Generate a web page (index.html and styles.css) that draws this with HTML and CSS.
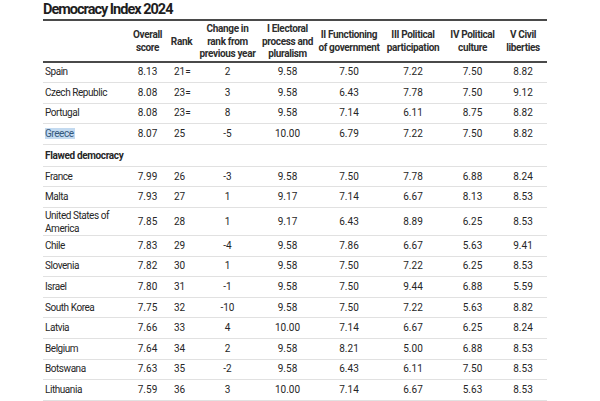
FILE: index.html
```html
<!DOCTYPE html>
<html lang="en">
<head>
<meta charset="utf-8">
<title>Democracy Index 2024</title>
<link rel="stylesheet" href="styles.css">
</head>
<body>
<div class="wrap">
  <h1 class="title">Democracy Index 2024</h1>
  <table class="di">
    <colgroup>
      <col class="c-country"><col class="c-score"><col class="c-rank"><col class="c-change">
      <col class="c-elec"><col class="c-func"><col class="c-part"><col class="c-cult"><col class="c-civ">
    </colgroup>
    <thead>
      <tr>
        <th class="th-country"></th>
        <th>Overall<br>score</th>
        <th>Rank</th>
        <th>Change in<br>rank from<br>previous year</th>
        <th>I Electoral<br>process and<br>pluralism</th>
        <th>II Functioning<br>of government</th>
        <th>III Political<br>participation</th>
        <th>IV Political<br>culture</th>
        <th>V Civil<br>liberties</th>
      </tr>
    </thead>
    <tbody>
      <tr><td class="country">Spain</td><td>8.13</td><td class="rank">21=</td><td>2</td><td>9.58</td><td>7.50</td><td>7.22</td><td>7.50</td><td>8.82</td></tr>
      <tr><td class="country">Czech Republic</td><td>8.08</td><td class="rank">23=</td><td>3</td><td>9.58</td><td>6.43</td><td>7.78</td><td>7.50</td><td>9.12</td></tr>
      <tr><td class="country">Portugal</td><td>8.08</td><td class="rank">23=</td><td>8</td><td>9.58</td><td>7.14</td><td>6.11</td><td>8.75</td><td>8.82</td></tr>
      <tr><td class="country"><span class="hl">Greece</span></td><td>8.07</td><td class="rank">25</td><td>-5</td><td>10.00</td><td>6.79</td><td>7.22</td><td>7.50</td><td>8.82</td></tr>
      <tr class="section"><td class="country" colspan="9">Flawed democracy</td></tr>
      <tr><td class="country">France</td><td>7.99</td><td class="rank">26</td><td>-3</td><td>9.58</td><td>7.50</td><td>7.78</td><td>6.88</td><td>8.24</td></tr>
      <tr><td class="country">Malta</td><td>7.93</td><td class="rank">27</td><td>1</td><td>9.17</td><td>7.14</td><td>6.67</td><td>8.13</td><td>8.53</td></tr>
      <tr class="tall"><td class="country">United States of<br>America</td><td>7.85</td><td class="rank">28</td><td>1</td><td>9.17</td><td>6.43</td><td>8.89</td><td>6.25</td><td>8.53</td></tr>
      <tr><td class="country">Chile</td><td>7.83</td><td class="rank">29</td><td>-4</td><td>9.58</td><td>7.86</td><td>6.67</td><td>5.63</td><td>9.41</td></tr>
      <tr><td class="country">Slovenia</td><td>7.82</td><td class="rank">30</td><td>1</td><td>9.58</td><td>7.50</td><td>7.22</td><td>6.25</td><td>8.53</td></tr>
      <tr><td class="country">Israel</td><td>7.80</td><td class="rank">31</td><td>-1</td><td>9.58</td><td>7.50</td><td>9.44</td><td>6.88</td><td>5.59</td></tr>
      <tr><td class="country">South Korea</td><td>7.75</td><td class="rank">32</td><td>-10</td><td>9.58</td><td>7.50</td><td>7.22</td><td>5.63</td><td>8.82</td></tr>
      <tr><td class="country">Latvia</td><td>7.66</td><td class="rank">33</td><td>4</td><td>10.00</td><td>7.14</td><td>6.67</td><td>6.25</td><td>8.24</td></tr>
      <tr><td class="country">Belgium</td><td>7.64</td><td class="rank">34</td><td>2</td><td>9.58</td><td>8.21</td><td>5.00</td><td>6.88</td><td>8.53</td></tr>
      <tr><td class="country">Botswana</td><td>7.63</td><td class="rank">35</td><td>-2</td><td>9.58</td><td>6.43</td><td>6.11</td><td>7.50</td><td>8.53</td></tr>
      <tr><td class="country">Lithuania</td><td>7.59</td><td class="rank">36</td><td>3</td><td>10.00</td><td>7.14</td><td>6.67</td><td>5.63</td><td>8.53</td></tr>
    </tbody>
  </table>
</div>
</body>
</html>
```

FILE: styles.css
```css
html, body {
  margin: 0;
  padding: 0;
  background: #ffffff;
}

body {
  font-family: Roboto, "Liberation Sans", sans-serif;
  color: #222222;
  overflow: hidden;
}

.wrap {
  margin-left: 43px;
  width: 504px;
}

.title {
  margin: 0;
  padding-top: 1px;
  font-size: 14.5px;
  line-height: 18px;
  font-weight: 700;
  letter-spacing: -1px;
  color: #1e1e1e;
}

.di {
  width: 504px;
  table-layout: fixed;
  border-collapse: collapse;
  border-top: 2px solid #4a4a4a;
}

.c-country { width: 87px; }
.c-score { width: 35px; }
.c-rank { width: 33px; }
.c-change { width: 59px; }
.c-elec { width: 61px; }
.c-func { width: 62px; }
.c-part { width: 66px; }
.c-cult { width: 53px; }
.c-civ { width: 48px; }

.di th {
  font-size: 10px;
  line-height: 12.5px;
  font-weight: 700;
  letter-spacing: -0.35px;
  color: #2e2e2e;
  text-align: center;
  vertical-align: middle;
  padding: 2px 0 0;
  height: 36px;
  border-bottom: 2px solid #4a4a4a;
  white-space: nowrap;
}

.di td {
  font-size: 10px;
  line-height: 12px;
  text-align: center;
  vertical-align: middle;
  padding: 0;
  height: 19.6px;
  border-bottom: 1px solid #e1e1e1;
  color: #262626;
  white-space: nowrap;
}

.di td.country {
  text-align: left;
  padding-left: 2px;
  letter-spacing: -0.45px;
}

.di td.rank {
  text-align: left;
  padding-left: 9px;
}

.di tr.tall td {
  height: 27px;
  line-height: 13px;
}

.di tr.section td {
  font-weight: 700;
  letter-spacing: -0.35px;
  height: 20px;
  padding-top: 1px;
}

.hl {
  background: #c3daf0;
  color: #35587c;
  padding: 0 1px 0 0;
}
```
